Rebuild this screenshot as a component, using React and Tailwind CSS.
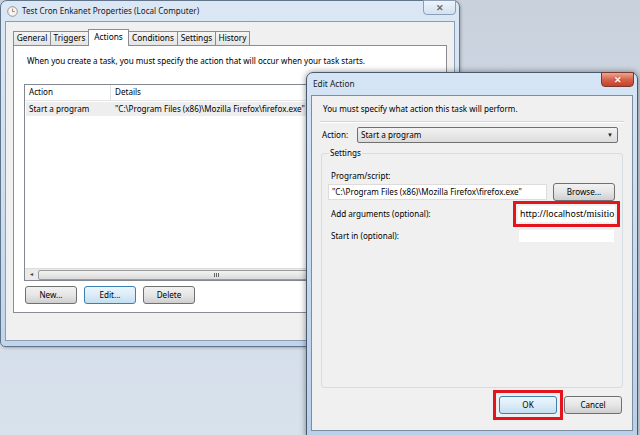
import React from "react";

const F = "font-['Segoe_UI','Noto_Sans',sans-serif]";

function WinButton({ children, focused, className = "" }) {
  return (
    <div
      className={`flex items-center justify-center h-[18px] rounded-[3px] border text-[8.1px] text-black ${
        focused
          ? "border-[#3c7fb1] bg-gradient-to-b from-[#eaf6fd] via-[#dcecf7] to-[#c2dff0]"
          : "border-[#707070] bg-gradient-to-b from-[#f2f2f2] via-[#e6e6e6] to-[#cfcfcf]"
      } ${className}`}
    >
      {children}
    </div>
  );
}

function ClockIcon() {
  return (
    <svg width="11" height="11" viewBox="0 0 11 11">
      <circle cx="5.5" cy="5.5" r="4.8" fill="#f4f4f4" stroke="#8a8a8a" strokeWidth="0.9" />
      <path d="M5.5 2.6 V5.6 H7.8" fill="none" stroke="#c0703a" strokeWidth="0.9" />
    </svg>
  );
}

function Tab({ label, selected, w }) {
  if (selected) {
    return (
      <div
        className={`h-[17px] -mb-px z-10 border border-b-0 border-[#898c95] bg-white flex items-start justify-center pt-[1px] text-[8.3px] ${w}`}
      >
        {label}
      </div>
    );
  }
  return (
    <div
      className={`h-[14px] border border-b-0 border-[#898c95] -ml-px first:ml-0 bg-gradient-to-b from-[#f4f4f4] to-[#e4e4e4] flex items-center justify-center text-[8.3px] ${w}`}
    >
      {label}
    </div>
  );
}

export default function App() {
  return (
    <div className={`relative w-[640px] h-[435px] overflow-hidden bg-gradient-to-b from-[#c9d1dd] to-[#d8e2ed] ${F} text-black`}>
      {/* Main window */}
      <div className="absolute left-0 top-0 w-[460px] h-[347px] rounded-t-[7px] rounded-b-[5px] border border-[#62748a] bg-gradient-to-b from-[#dbe7f4] via-[#cfe0f2] to-[#c0d5ec] flex flex-col px-[4px] pb-[5px] shadow-[1px_1px_3px_rgba(0,0,0,0.25)]">
        <div className="h-[20px] flex items-center gap-[4px] pl-[2px] shrink-0">
          <ClockIcon />
          <span className="text-[8.1px] text-[#1a1a1a]">Test Cron Enkanet Properties (Local Computer)</span>
        </div>
        <div className="flex-1 border border-[#8b9db3] bg-[#f0f0f0] flex flex-col pl-[7px] pt-[6px]">
          <div className="flex items-end h-[17px]">
            <Tab label="General" w="w-[38px]" />
            <Tab label="Triggers" w="w-[39px]" />
            <Tab label="Actions" selected w="w-[41px] -ml-px" />
            <Tab label="Conditions" w="w-[50px]" />
            <Tab label="Settings" w="w-[39px]" />
            <Tab label="History" w="w-[35px]" />
          </div>
          <div className="w-[434px] h-[268px] border border-[#898c95] bg-white flex flex-col pl-[10px] pt-[9px]">
            <div className="text-[8.1px] leading-[12px] pl-[3px]">
              When you create a task, you must specify the action that will occur when your task starts.
            </div>
            <div className="mt-[17px] w-[412px] h-[197px] border border-[#828790] bg-white flex flex-col">
              <div className="h-[16px] flex border-b border-[#e5e5e5] text-[8.1px] items-center">
                <div className="w-[86px] pl-[4px] border-r border-[#e0e0e0] h-full flex items-center">Action</div>
                <div className="pl-[4px]">Details</div>
              </div>
              <div className="h-[14px] flex items-center text-[8.1px] bg-[#eeeeee] mt-[1px] mx-[1px]">
                <div className="w-[85px] pl-[3px]">Start a program</div>
                <div className="pl-[4px] whitespace-nowrap">"C:\Program Files (x86)\Mozilla Firefox\firefox.exe"</div>
              </div>
              <div className="flex-1" />
              <div className="h-[12px] flex items-center bg-[#eaeaea] border-t border-[#dcdcdc]">
                <div className="w-[13px] flex items-center justify-center text-[6px] text-[#444]">◂</div>
                <div className="flex-1 h-[10px] mr-[40px] rounded-[2px] border border-[#9a9a9a] bg-gradient-to-b from-[#f3f3f3] to-[#dadada] flex items-center justify-center">
                  <div className="flex gap-[1px]">
                    <div className="w-px h-[4px] bg-[#666]" />
                    <div className="w-px h-[4px] bg-[#666]" />
                    <div className="w-px h-[4px] bg-[#666]" />
                  </div>
                </div>
              </div>
            </div>
            <div className="mt-[5px] flex gap-[7px] pl-[1px]">
              <WinButton className="w-[52px]">New...</WinButton>
              <WinButton className="w-[52px]" focused>Edit...</WinButton>
              <WinButton className="w-[52px]">Delete</WinButton>
            </div>
          </div>
        </div>
        {/* close button */}
        <div className="absolute right-[3px] top-[-1px] w-[33px] h-[15px] rounded-b-[4px] border border-[#8c9fb6] bg-gradient-to-b from-[#eef4fb] to-[#d2e1f1] flex items-center justify-center text-[9px] font-bold text-[#6b6b6b] leading-none">
          ✕
        </div>
      </div>

      {/* Edit Action dialog */}
      <div className="absolute left-[306px] top-[72px] w-[332px] h-[366px] rounded-t-[7px] border border-[#4a5a6c] bg-gradient-to-b from-[#d6e5f5] via-[#c7dbf0] to-[#b9d0ea] flex flex-col px-[4px] pb-[6px] shadow-[0_0_6px_rgba(0,0,0,0.45)]">
        <div className="h-[22px] flex items-center pl-[2px] shrink-0">
          <span className="text-[8.3px] text-[#1a1a1a]">Edit Action</span>
        </div>
        <div className="flex-1 border border-[#7d8da0] bg-[#f0f0f0] flex flex-col">
          <div className="text-[8.1px] leading-[12px] pl-[11px] pt-[7px]">
            You must specify what action this task will perform.
          </div>
          <div className="mx-[8px] mt-[6px] h-[2px] border-t border-[#d5d5d5] border-b border-b-white" />
          <div className="flex items-center pl-[10px] mt-[4px]">
            <span className="text-[8.1px] w-[35px]">Action:</span>
            <div className="w-[261px] h-[16px] rounded-[2px] border border-[#707070] bg-gradient-to-b from-[#f2f2f2] to-[#dcdcdc] flex items-center justify-between pl-[3px] pr-[4px] text-[8.1px]">
              <span>Start a program</span>
              <span className="text-[6px] text-[#222]">▼</span>
            </div>
          </div>
          <fieldset className="mx-[9px] mt-[5px] h-[240px] border border-[#d5dde3] rounded-[3px] px-[5px] flex flex-col">
            <legend className="text-[8.1px] px-[1px] ml-[2px] leading-[10px]">Settings</legend>
            <div className="text-[8.1px] pl-[4px] mt-[12px] leading-[11px]">Program/script:</div>
            <div className="flex items-center mt-[2px] pl-[1px]">
              <div className="w-[219px] h-[16px] bg-white border border-[#dcdcdc] text-[8.1px] pl-[3px] flex items-center whitespace-nowrap">
                "C:\Program Files (x86)\Mozilla Firefox\firefox.exe"
              </div>
              <WinButton className="w-[62px] ml-[6px] h-[17px]">Browse...</WinButton>
            </div>
            <div className="flex items-center justify-between mt-[0px]">
              <span className="text-[8.1px] pl-[4px]">Add arguments (optional):</span>
              <div className="border-[3px] border-[#e3141c] p-[2px] mr-[-3px]">
                <div className="w-[97px] h-[16px] bg-white flex items-center pl-[2px] overflow-hidden">
                  <span className="text-[8.8px] leading-[12px] whitespace-nowrap">
                    http://localhost/<span className="font-['Liberation_Serif',serif] text-[10px] leading-[12px]">misitio</span>
                  </span>
                </div>
              </div>
            </div>
            <div className="flex items-center justify-between mt-[3px]">
              <span className="text-[8.1px] pl-[4px]">Start in (optional):</span>
              <div className="w-[95px] h-[12px] bg-white mr-[3px]" />
            </div>
          </fieldset>
          <div className="flex items-center justify-end pr-[10px] mt-[2px] gap-[1px]">
            <div className="border-[3px] border-[#e3141c] p-[3px]">
              <WinButton className="w-[58px]" focused>OK</WinButton>
            </div>
            <WinButton className="w-[58px]">Cancel</WinButton>
          </div>
        </div>
        {/* close button */}
        <div className="absolute right-[3px] top-[-1px] w-[33px] h-[15px] rounded-b-[4px] border border-[#7a3a2c] bg-gradient-to-b from-[#e9a792] via-[#d6634a] to-[#c2412a] flex items-center justify-center text-[9px] font-bold text-white leading-none [text-shadow:0_0_2px_#ff2020]">
          ✕
        </div>
      </div>
    </div>
  );
}
